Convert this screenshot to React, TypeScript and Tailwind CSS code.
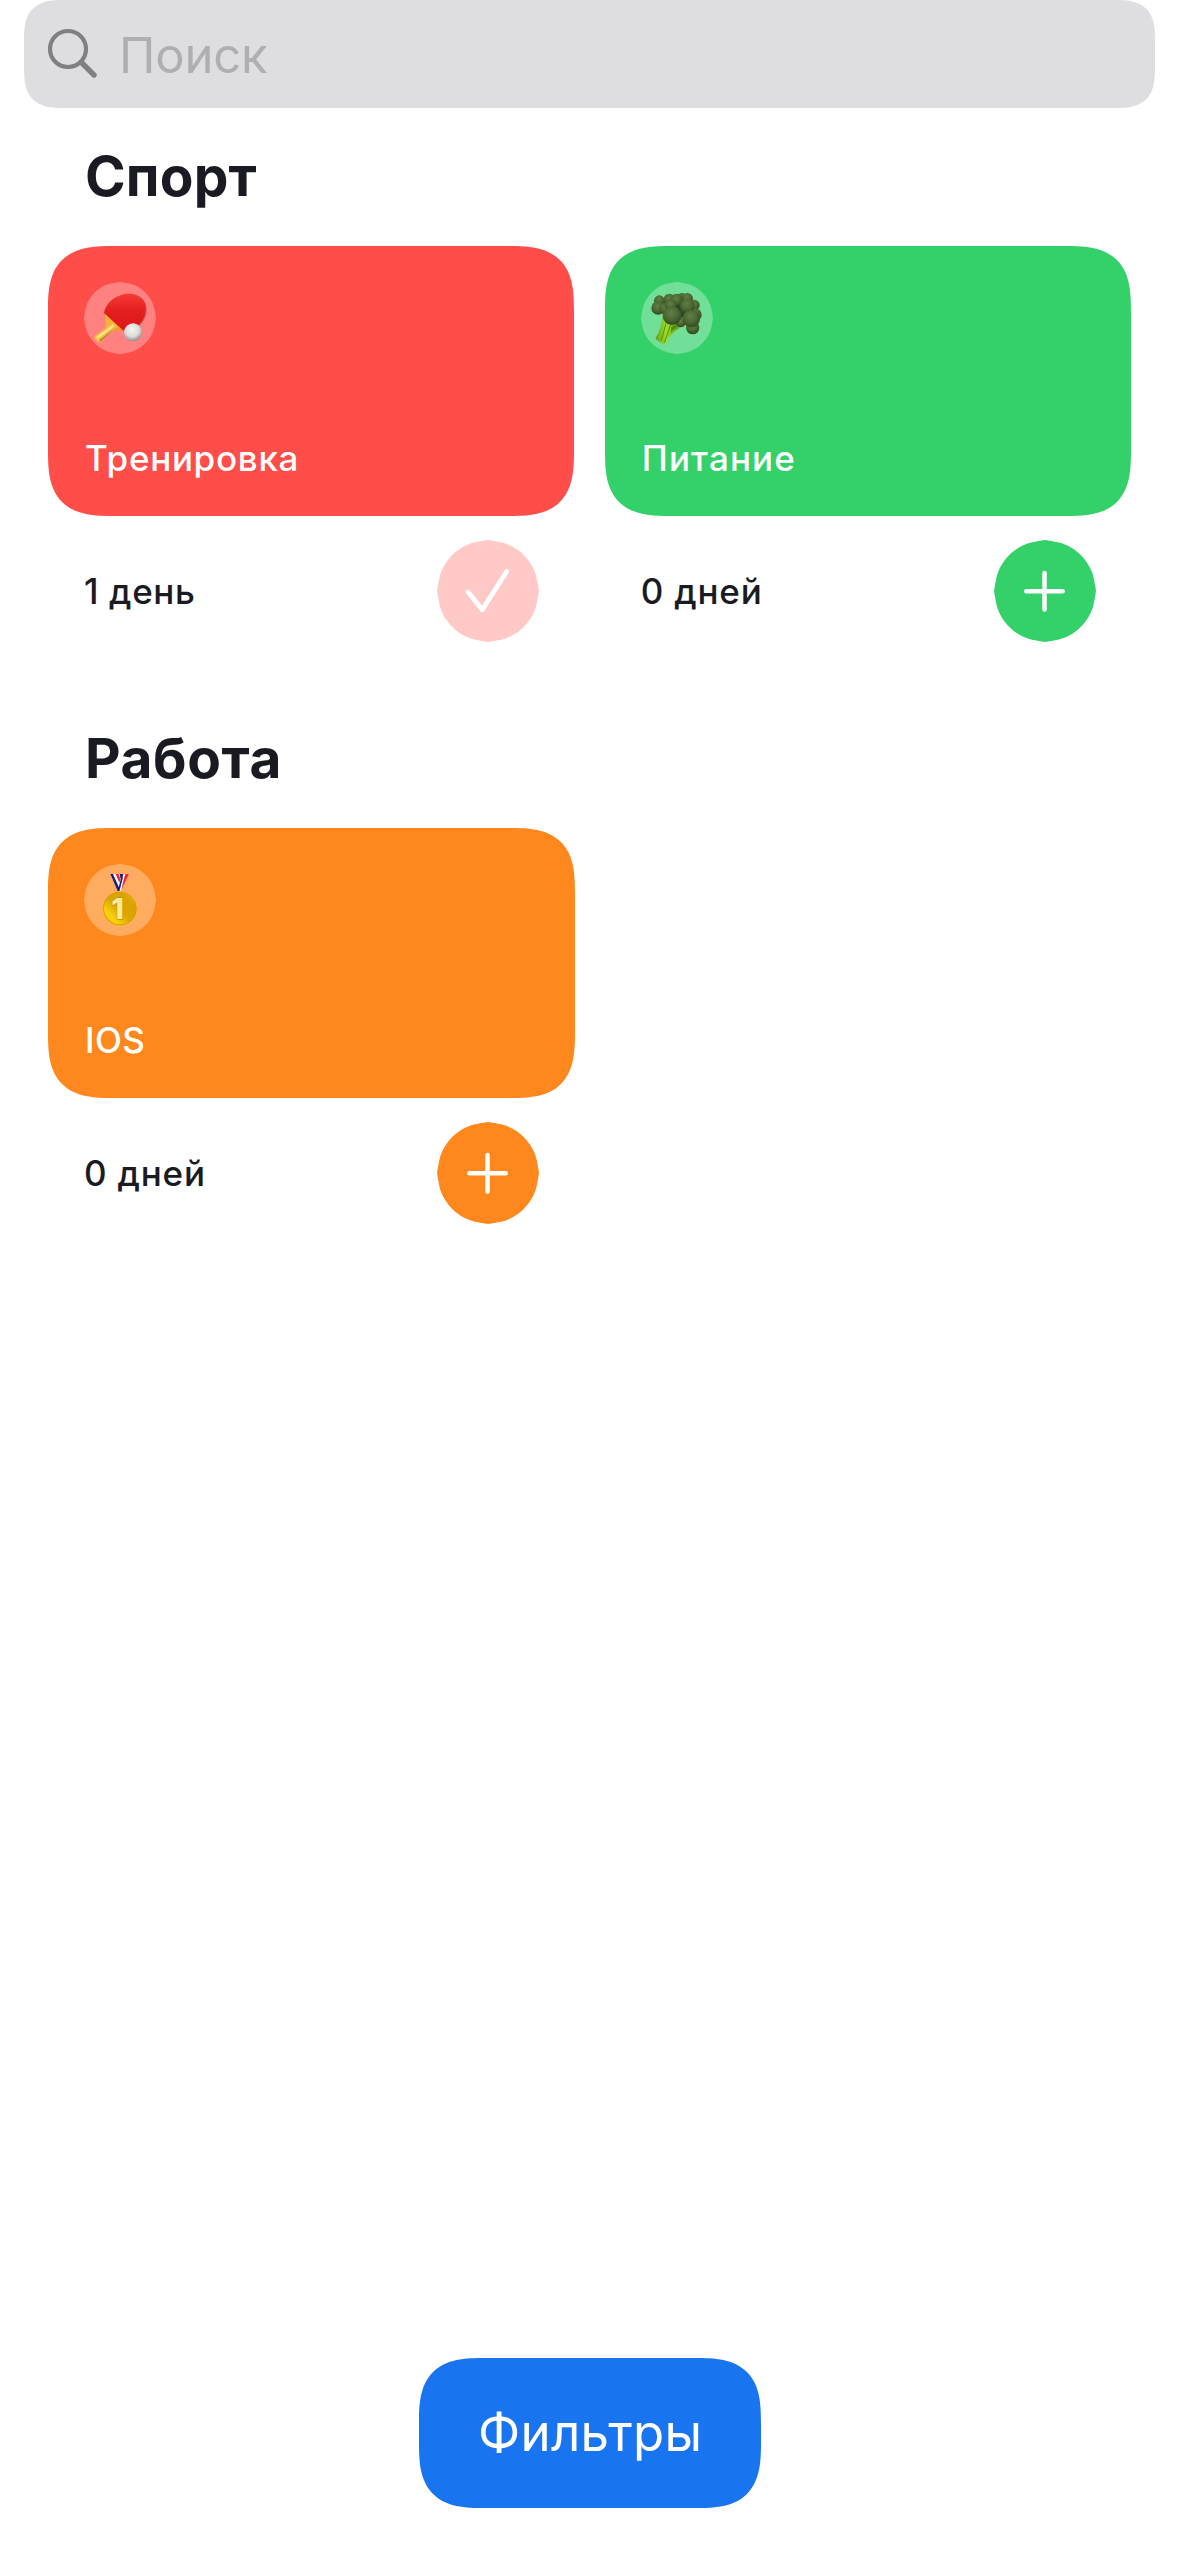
import React from "react";

const Disc = "M51 0C55 .6 60 1.5 64 2.3C81 6 96 21 99.7 38C100.5 42 101.4 47 102 51C101.4 55 100.5 60 99.7 64C96 81 81 96 64 99.7C60 100.5 55 101.4 51 102C47 101.4 42 100.5 38 99.7C21 96 6 81 2.3 64C1.5 60 .6 55 0 51C.6 47 1.5 42 2.3 38C6 21 21 6 38 2.3C42 1.5 47 .6 51 0Z";

function PaddleArt() {
  return (
    <g transform="scale(.33333) translate(-12 -12)">
      <defs>
        <linearGradient id="blade" x1="0" y1="0" x2="0" y2="1">
          <stop offset="0" stopColor="#f83a35" />
          <stop offset=".45" stopColor="#e3201f" />
          <stop offset="1" stopColor="#dd1418" />
        </linearGradient>
        <linearGradient id="handle" x1="0" y1="0" x2="1" y2="1">
          <stop offset="0" stopColor="#e09a1c" />
          <stop offset=".5" stopColor="#f6c246" />
          <stop offset="1" stopColor="#a8721a" />
        </linearGradient>
        <radialGradient id="ball" cx=".45" cy=".35" r=".65">
          <stop offset="0" stopColor="#f4f3f1" />
          <stop offset=".6" stopColor="#dddcda" />
          <stop offset="1" stopColor="#8d8b8b" />
        </radialGradient>
      </defs>
      <path d="M73 108C84 74 116 48 150 47C180 48 201 68 200 95C199 118 189 136 174 145L131 158Z" fill="#8c2a2c" opacity=".45" />
      <path d="M73 104L131 158L98 157C92 152 78 150 76 145Z" fill="#f79a22" />
      <path d="M76 108L110 141L78 150Z" fill="#f5b23a" />
      <path d="M97 134L43 175Q40 179 44 183L57 194Q62 196 65 191L82 168Q94 163 114 147Z" fill="url(#handle)" />
      <path d="M101 138L48 177L53 182L98 149Z" fill="#fbe28c" />
      <path d="M106 149L62 190L58 187Z" fill="#9a6818" opacity=".7" />
      <path d="M72 105C78 70 114 47 147 47C181 50 199 69 197 93C196 114 188 134 172 142Q154 148 131 158Z" fill="url(#blade)" />
      <circle cx="159" cy="163" r="27" fill="url(#ball)" />
    </g>
  );
}

const florets: [number, number, number][] = [
  [246, 176, 17], [178, 182, 16], [208, 178, 17], [262, 176, 17], [230, 180, 19],
  [282, 196, 17], [174, 204, 20], [196, 206, 18], [286, 224, 19], [278, 263, 20],
  [212, 196, 18], [262, 198, 22], [242, 246, 16], [274, 236, 26], [216, 227, 28],
];

function BroccoliArt() {
  return (
    <g transform="scale(.33333) translate(-123 -126)">
      <defs>
        <radialGradient id="floret" cx=".45" cy=".35" r=".65">
          <stop offset="0" stopColor="#627f45" />
          <stop offset=".6" stopColor="#4a6632" />
          <stop offset="1" stopColor="#30481f" />
        </radialGradient>
        <linearGradient id="stalk" x1="0" y1="0" x2="1" y2="0">
          <stop offset="0" stopColor="#5ca312" />
          <stop offset=".45" stopColor="#a2dc2a" />
          <stop offset="1" stopColor="#5b9a10" />
        </linearGradient>
      </defs>
      <path d="M187 232Q186 262 167 294Q168 302 192 312Q199 312 202 303Q210 282 238 264L228 236Z" fill="url(#stalk)" />
      <path d="M198 250L184 302M212 254L193 308" stroke="#4f9410" strokeWidth="3" fill="none" />
      <path d="M214 262L226 252L230 262Q218 270 213 278Z" fill="#4b8d17" />
      <path d="M175 180L250 170L292 200L290 262L240 250L190 220Z" fill="#30481f" />
      {florets.map(([x, y, r]) => (
        <circle key={`${x}-${y}`} cx={x} cy={y} r={r} fill="url(#floret)" />
      ))}
    </g>
  );
}

function MedalArt() {
  return (
    <g transform="scale(.33333) translate(-132 -132)">
      <defs>
        <linearGradient id="gold" x1="0" y1="1" x2="1" y2="0">
          <stop offset="0" stopColor="#d9a800" />
          <stop offset=".25" stopColor="#f9d20e" />
          <stop offset=".5" stopColor="#dba600" />
          <stop offset=".75" stopColor="#d9a400" />
          <stop offset="1" stopColor="#f2cb1c" />
        </linearGradient>
      </defs>
      <path d="M267 162L241 213H233L248 162Z" fill="#fff" />
      <path d="M267 162L244 210L249 186L256 162Z" fill="#fb2430" />
      <path d="M240 162H250L238 213H233Z" fill="#15207f" />
      <path d="M211 162H238L243 180L238 213H233Z" fill="#fff" />
      <path d="M211 162H219L238 205L236 213H233Z" fill="#15207f" />
      <path d="M227 162H236L241 178L238 188Z" fill="#fb2430" />
      <path d="M243 176L249 172L238 213H233Z" fill="#15207f" />
      <circle cx="239" cy="266" r="51" fill="url(#gold)" />
      <circle cx="239" cy="266" r="49" fill="none" stroke="#d3a200" strokeWidth="3" />
      <text x="233" y="297" textAnchor="middle" fontFamily="Inter, sans-serif" fontWeight="800" fontSize="86" fill="#fbeb96" stroke="#c99508" strokeWidth="4" paintOrder="stroke">1</text>
    </g>
  );
}

function Badge({ children }: { children: React.ReactNode }) {
  return (
    <svg viewBox="0 0 72 72" className="size-[72px] shrink-0">
      <path d={Disc} transform="scale(.70588)" fill="#fff" fillOpacity=".3" />
      {children}
    </svg>
  );
}

interface TrackerProps {
  title: string;
  days: string;
  art: React.ReactNode;
  cardClass: string;
  buttonColor: string;
  done?: boolean;
  spacing: string;
  daySpacing: string;
}

function Tracker({ title, days, art, cardClass, buttonColor, done, spacing, daySpacing }: TrackerProps) {
  return (
    <article className="w-[526.5px]">
      <div className={`flex h-[270px] flex-col justify-between rounded-[66px] p-[36px] pb-[34px] [corner-shape:superellipse(1.53)] ${cardClass}`}>
        <Badge>{art}</Badge>
        <p className={`pl-px text-[35px] leading-[48px] font-medium text-white ${spacing}`}>{title}</p>
      </div>
      <div className="mt-[24px] flex h-[102px] items-center justify-between pr-[35.5px] pl-[36px]">
        <p className={`text-[35px] leading-[48px] font-medium text-[#1a1b22] ${daySpacing}`}>{days}</p>
        <button aria-label={done ? "Выполнено" : "Добавить"} className="size-[102px]">
          <svg viewBox="0 0 102 102" className="size-full" fill="none" stroke="#fff" strokeWidth="4.7" strokeLinecap="round" strokeLinejoin="round">
            <path d={Disc} fill={buttonColor} stroke="none" />
            {done ? <path d="M31 52L45.3 69.7L69.7 31.5" /> : <path d="M32.3 51.3H68.7M50.5 33.1V69.5" strokeWidth="4.5" />}
          </svg>
        </button>
      </div>
    </article>
  );
}

export default function App() {
  return (
    <main className="flex h-[2556px] w-[1179px] flex-col bg-white font-['Inter',sans-serif]">
      <label className="mx-[24px] flex h-[108px] shrink-0 items-center rounded-[41px] bg-[#dedee0] pl-[22px] [corner-shape:superellipse(1.53)]">
        <svg viewBox="0 0 54 54" className="size-[54px] shrink-0" fill="none" stroke="#808084" strokeLinecap="round">
          <circle cx="22" cy="22" r="18" strokeWidth="4.2" />
          <path d="M35.5 35.5L48 48" strokeWidth="5.4" />
        </svg>
        <span className="pt-[3px] pl-[19px] text-[49px] leading-[60px] tracking-[-0.19px] text-[#afafb1]">Поиск</span>
      </label>

      <section className="px-[48px]">
        <h2 className="mt-[38px] pl-[37px] text-[55px] leading-[60px] font-bold tracking-[0.17px] text-[#1a1b22]">Спорт</h2>
        <div className="mt-[40px] flex gap-[30.5px]">
          <Tracker title="Тренировка" days="1 день" art={<PaddleArt />} cardClass="bg-[#ff4d4a]" buttonColor="#ffc9c8" done spacing="tracking-[0.69px]" daySpacing="tracking-[0.62px]" />
          <Tracker title="Питание" days="0 дней" art={<BroccoliArt />} cardClass="bg-[#34d16a]" buttonColor="#34d16a" spacing="tracking-[1.12px]" daySpacing="tracking-[0.8px]" />
        </div>
      </section>

      <section className="px-[48px]">
        <h2 className="mt-[86px] pl-[37px] text-[55px] leading-[60px] font-bold tracking-[0.6px] text-[#1a1b22]">Работа</h2>
        <div className="mt-[40px] flex gap-[30.5px]">
          <Tracker title="IOS" days="0 дней" art={<MedalArt />} cardClass="bg-[#ff881e]" buttonColor="#ff881e" spacing="tracking-[0.4px]" daySpacing="tracking-[0.8px]" />
        </div>
      </section>

      <button className="mt-auto mb-[48px] ml-[419px] flex h-[150px] w-[342px] items-center rounded-[66px] bg-[#1974f0] pl-[59px] text-[51px] leading-[60px] tracking-[0.25px] text-white [corner-shape:superellipse(1.53)]">
        Фильтры
      </button>
    </main>
  );
}
